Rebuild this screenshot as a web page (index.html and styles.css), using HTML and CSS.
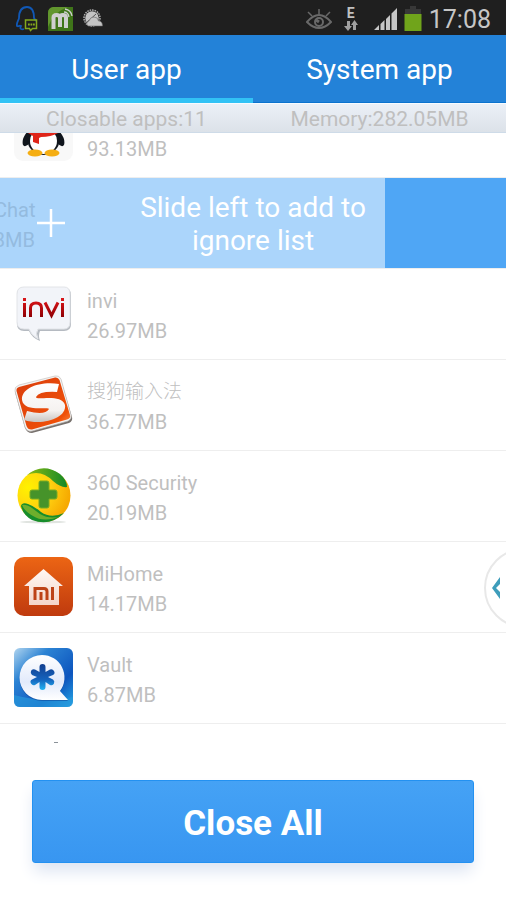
FILE: index.html
```html
<!DOCTYPE html>
<html lang="en">
<head>
<meta charset="utf-8">
<meta name="viewport" content="width=device-width, initial-scale=1">
<title>User app</title>
<link rel="stylesheet" href="styles.css">
</head>
<body>
<div class="status">
  <div class="status-group notices">
    <svg width="22" height="26" viewBox="0 0 22 26" fill="none">
      <path d="M8 23C4 24 4 22 5 20C3 19 3 21 1 20C0 17 3 14 3 12C3 5 6 1 11 1S18 5 18 12L20 15" stroke="#1158b5" stroke-width="1.8"/>
      <path d="M9.500 14h11v8.500h-4l-2 2-1-2h-4z" stroke="#83a91c" stroke-width="1.500"/>
      <path d="M12 18.500h7" stroke="#83a91c" stroke-width="2" stroke-dasharray="1.800 .7"/>
    </svg>
    <svg width="25" height="24" viewBox="0 0 25 24">
      <path d="M5 0H25V24H0V6Q0 1 5 0Z" fill="#3f7519"/>
      <path d="M5 0H20Q5 5 0 20V6Q0 1 5 0Z" fill="#62962e"/>
      <path d="M5.500 22V10.500Q5.500 8 8.500 8T12 10.500V20M12 10.500Q12 8 15 8T18 10.500V21" fill="none" stroke="#cfcfcf" stroke-width="4"/>
      <path d="M16 5q4 0 5 5M17 2q6 1 7 7" fill="none" stroke="#cfcfcf" stroke-width="1.300"/>
    </svg>
    <svg width="20" height="19" viewBox="0 0 20 19">
      <circle cx="9" cy="9" r="8" fill="none" stroke="#b0b0b0" stroke-width="1.500" stroke-dasharray="1.600 .9"/>
      <circle cx="9" cy="9" r="6.800" fill="#c4c4c4"/>
      <path d="M3 14L13 5" fill="none" stroke="#555" stroke-width="1"/>
      <path d="M5 17q-3-3 1-5q1-4 5-4q4 0 4.500 4q4 0 4 5z" fill="#c4c4c4" stroke="#666" stroke-width=".6"/>
    </svg>
  </div>
  <div class="status-group">
    <svg width="26" height="22" viewBox="0 0 26 22" fill="none" stroke="#696969" stroke-width="2">
      <path d="M1 14Q7 7 13 7T25 14Q19 20 13 20T1 14Z"/>
      <path d="M13 1v5M2 4l4 4M24 4l-4 4" stroke-width="1.500"/>
      <circle cx="13" cy="14" r="4"/><path d="M10 12l3 2" stroke-width="3"/>
    </svg>
    <div class="network">
      <span>E</span>
      <svg width="14" height="11" viewBox="0 0 14 11"><path d="M3 1h3v5h2l-4 5-4-5h3zM9 10V5H7l3.500-5L14 5h-2v5z" fill="#a0a0a0"/></svg>
    </div>
    <svg class="signal" width="23" height="22" viewBox="0 0 23 22"><path d="M0 22L5 17V22ZM6.500 22V16L10.500 12V22ZM12 22V11L16 7V22ZM17.500 22V5.500L23 0V22Z" fill="#c6c6c6"/></svg>
    <svg width="18" height="26" viewBox="0 0 18 26"><path d="M6 0h6v3h5v6H1V3h5z" fill="#383838"/><path d="M.5 8h17v17H.5z" fill="#70a41b"/></svg>
    <time>17:08</time>
  </div>
</div>
<nav class="tabs">
  <a class="tab active" href="#user">User app</a>
  <a class="tab" href="#system">System app</a>
</nav>
<div class="summary"><span>Closable apps:11</span><span>Memory:282.05MB</span></div>

<main class="list-area">
  <ul class="apps">
    <li class="app">
      <svg class="icon" viewBox="0 0 59 59">
        <rect width="59" height="59" rx="9" fill="#f8f8f8"/>
        <path d="M15 28Q7 36 9 43Q11 46 16 41L20 34H39L43 41Q48 46 50 43Q52 36 44 28Z" fill="#10151c"/>
        <ellipse cx="29.500" cy="20" rx="15" ry="15" fill="#10151c"/>
        <ellipse cx="29.500" cy="38" rx="16" ry="15" fill="#10151c"/>
        <ellipse cx="29.500" cy="39" rx="13.500" ry="13" fill="#fff"/>
        <path d="M14 27H45L44 31Q37 35 27 35L25 36V42L19 40V34L14 31Z" fill="#df2519"/>
        <ellipse cx="21" cy="51" rx="7.500" ry="3.500" fill="#f5ae13"/><ellipse cx="38" cy="51" rx="7.500" ry="3.500" fill="#f5ae13"/>
      </svg>
      <div class="info"><span>93.13MB</span></div>
    </li>
    <li class="app slid">
      <div class="slid-panel"><div class="info"><span>WeChat</span><span>6.88MB</span></div></div>
      <div class="hint">
        <svg width="28" height="28" viewBox="0 0 28 28"><path d="M14 0v28M0 14h28" stroke="#fff" stroke-width="2.500"/></svg>
        <p>Slide left to add to ignore list</p>
      </div>
    </li>
    <li class="app">
      <svg class="icon" viewBox="0 0 59 59">
        <defs><linearGradient id="red" gradientUnits="userSpaceOnUse" x1="0" y1="14" x2="0" y2="33"><stop stop-color="#e31519"/><stop offset="1" stop-color="#8e0004"/></linearGradient></defs>
        <path d="M10 4H50Q57 4 57 11V40Q57 47 50 47H26Q24 51 26 57Q18 54 15 47H10Q3 47 3 40V11Q3 4 10 4Z" fill="#b5bac1"/>
        <path d="M10 3H50Q56 3 56 10V38Q56 45 50 45H24Q21 49 24 55Q17 51 15 45H10Q3 45 3 38V10Q3 3 10 3Z" fill="#f2f4f9" stroke="#e2e4e8"/>
        <path d="M10.500 19V33M16.500 33V24Q16.500 19 22 19T27.500 24V33M31 18.500L37.500 31.500L44 18.500M48.500 19V33" fill="none" stroke="url(#red)" stroke-width="3"/>
        <path d="M9 14h3v3H9zM47 14h3v3h-3z" fill="#d71519"/>
      </svg>
      <div class="info"><span>invi</span><span>26.97MB</span></div>
    </li>
    <li class="app">
      <svg class="icon" viewBox="0 0 59 59">
        <defs><linearGradient id="orange" x2="1" y2="1"><stop stop-color="#d93d0c"/><stop offset=".8" stop-color="#ef5009"/><stop offset="1" stop-color="#ff9650"/></linearGradient><linearGradient id="silver" x2="0" y2="1"><stop stop-color="#fff"/><stop offset=".7" stop-color="#f5f2f0"/><stop offset="1" stop-color="#c8c4c0"/></linearGradient></defs>
        <path d="M5 12L41 2Q45 1 47 5L58 42Q59 46 55 48L18 58Q13 58 11 53L1 17Q1 13 5 12Z" fill="#77716d"/>
        <path d="M5 10L41 1Q45 0 47 4L57 40Q58 44 54 46L18 56Q13 57 11 52L1 16Q0 12 5 10Z" fill="#f4f4f3" stroke="#c7c3c0" stroke-width=".7"/>
        <path d="M5 12L41 2.500Q44 2 45.500 5L56 40Q57 43 53 44.500L18 54.500Q14 55 12.500 51L2.500 16Q2 13 5 12Z" fill="url(#orange)"/>
        <path d="M45 9L43 17Q25 16 22 22C21 26 48 18 51 30C53 43 29 51 10 45L13 36Q31 41 35 34C35 31 10 38 8 25C7 13 26 6 45 9Z" fill="url(#silver)"/>
      </svg>
      <div class="info"><span class="chinese" lang="zh">搜狗输入法</span><span>36.77MB</span></div>
    </li>
    <li class="app">
      <svg class="icon" viewBox="0 0 59 59">
        <defs><radialGradient id="yellow" cx=".2" cy=".35" r=".8"><stop stop-color="#fff200"/><stop offset=".55" stop-color="#ffd010"/><stop offset="1" stop-color="#f6a900"/></radialGradient><linearGradient id="leaf"><stop stop-color="#8abb13"/><stop offset="1" stop-color="#138827"/></linearGradient></defs>
        <ellipse cx="29" cy="56" rx="23" ry="1.500" fill="#e0e4e0"/>
        <circle cx="30" cy="29.500" r="26.500" fill="url(#yellow)"/>
        <path d="M13 9Q29-4 46 8Q53 14 53 21Q47 22 39 15Q27 3 13 9Z" fill="url(#leaf)"/>
        <path d="M7 40Q8 36 14 38Q20 40 27 46Q37 53 50 47Q36 61 18 54Q9 49 7 40Z" fill="#168d2b"/>
        <path d="M8 39Q12 38 18 42L26 48Q36 54 47 50Q30 57 19 50Q11 46 8 39Z" fill="#6eae2c"/>
        <path d="M26 15H33Q35 15 35 17V24H41Q43 24 43 26V31Q43 33 41 33H35V40Q35 42 33 42H27Q25 42 25 40V33H18Q16 33 16 31V26Q16 24 18 24H25V17Q25 15 26 15Z" fill="#46932a" stroke="#78ab22"/>
      </svg>
      <div class="info"><span>360 Security</span><span>20.19MB</span></div>
    </li>
    <li class="app">
      <svg class="icon" viewBox="0 0 59 59">
        <defs><linearGradient id="home" x2="0" y2="1"><stop stop-color="#ec6514"/><stop offset="1" stop-color="#bf3a0e"/></linearGradient><linearGradient id="house" x2="0" y2="1"><stop stop-color="#fff8f5"/><stop offset="1" stop-color="#f4d5c9"/></linearGradient></defs>
        <rect width="59" height="59" rx="10" fill="url(#home)"/>
        <path d="M29.500 12L49 29H45V48H15V29H10Z" fill="url(#house)"/>
        <path d="M21 43V31.500H30Q33 31.500 33 34.500V43M27 35V43M38.500 30V43" fill="none" stroke="#bd4217" stroke-width="3"/>
      </svg>
      <div class="info"><span>MiHome</span><span>14.17MB</span></div>
    </li>
    <li class="app">
      <svg class="icon" viewBox="0 0 59 59">
        <defs><linearGradient id="vault" x2="1" y2="1"><stop stop-color="#b1d5ef"/><stop offset=".3" stop-color="#2b83d4"/><stop offset=".7" stop-color="#0d55be"/><stop offset="1" stop-color="#27a8e5"/></linearGradient><linearGradient id="star" x2="0" y2="1"><stop stop-color="#123e8f"/><stop offset=".6" stop-color="#1463bd"/><stop offset="1" stop-color="#23b4f2"/></linearGradient><linearGradient id="bubble" x2="0" y2="1"><stop stop-color="#fff"/><stop offset=".6" stop-color="#e2eafb"/><stop offset="1" stop-color="#fff"/></linearGradient></defs>
        <rect width="59" height="59" rx="6" fill="url(#vault)"/>
        <path d="M0 47Q30 55 59 49V53Q59 59 53 59H6Q0 59 0 53Z" fill="#2698db" opacity=".7"/>
        <path d="M28 8A22.500 22.500 0 1 0 28 53H54L46 44A22.500 22.500 0 0 0 28 8Z" fill="#0c3f91" opacity=".5"/>
        <path d="M28 7A22.500 22.500 0 1 0 28 52H54L46 43A22.500 22.500 0 0 0 28 7Z" fill="url(#bubble)"/>
        <path d="M25.500 19Q25.500 16 28.500 16T31.500 19V24L36 21.500Q38.500 20.500 40 23T39 27L34 29L39 31.500Q41 33 40 35.500T36 37L31.500 34V39Q31.500 42 28.500 42T25.500 39V34L21 37Q18.500 38 17 35.500T18 31.500L23 29L18 27Q16 25.500 17 23T21 21.500L25.500 24Z" fill="url(#star)"/>
      </svg>
      <div class="info"><span>Vault</span><span>6.87MB</span></div>
    </li>
    <li class="app">
      <svg class="icon" viewBox="0 0 59 59"><path d="M40 3h4v1h-4z" fill="#8b9299"/></svg>
    </li>
  </ul>
  <button class="handle" type="button" aria-label="Open side panel">
    <svg width="8" height="22" viewBox="0 0 8 22"><path d="M8 0V7L4 11L8 15V22L0 11Z" fill="#3e9dbb"/></svg>
  </button>
</main>
<footer class="actions"><button class="close-all" type="button">Close All</button></footer>
</body>
</html>
```
FILE: styles.css
```css
* { box-sizing: border-box; }

body {
  margin: 0;
  height: 100vh;
  display: flex;
  flex-direction: column;
  overflow: hidden;
  background: #fff;
  color: #bfbfbf;
  font-family: Roboto, "Noto Sans CJK SC", sans-serif;
  font-size: 20px;
}

svg { display: block; flex: none; }

.status {
  display: flex;
  justify-content: space-between;
  align-items: center;
  height: 35px;
  flex: none;
  padding: 2px 15px 0 16px;
  background: #1f1f1f;
}

.status-group { display: flex; align-items: center; gap: 7px; }
.notices { gap: 10px; }

.network {
  display: flex;
  flex-direction: column;
  align-items: center;
  margin: 0 9px 0 5px;
  color: #c0c0c0;
  font-size: 14px;
  font-weight: 700;
  line-height: 13px;
}

.status time {
  padding-top: 2px;
  color: #c6c6c6;
  font-size: 25px;
  line-height: 32px;
}

.tabs {
  display: flex;
  height: 68px;
  flex: none;
  background: #2382d8;
}

.tab {
  flex: 1;
  padding-top: 2px;
  border-bottom: 1px solid #0b73ce;
  color: #fff;
  font-size: 28px;
  line-height: 66px;
  text-align: center;
  text-decoration: none;
}

.tab.active { box-shadow: inset 0 -5px #32c2f5; border-bottom: 0; }

.summary {
  display: flex;
  height: 30px;
  flex: none;
  border-top: 1px solid #f7fbff;
  border-bottom: 1px solid #cedbe8;
  background: linear-gradient(#ebf0f7, #dce2e9);
  font-size: 21px;
  line-height: 30px;
  text-align: center;
}

.summary span { flex: 1; }

.list-area {
  position: relative;
  flex: 1;
  min-height: 0;
  overflow: hidden;
}

.apps { margin: -46px 0 0; padding: 0; list-style: none; }

.app {
  display: flex;
  align-items: center;
  gap: 14px;
  height: 91px;
  padding: 0 0 1px 14px;
  border-bottom: 1px solid #eee;
}

.icon { width: 59px; height: 59px; }

.info {
  display: flex;
  flex-direction: column;
  justify-content: flex-end;
  height: 64px;
  line-height: 30px;
}

.chinese { font-size: 19px; font-weight: 300; }

.slid {
  position: relative;
  padding: 0;
  background: #4fa6f5;
  overflow: hidden;
}

.slid-panel {
  display: flex;
  align-items: center;
  flex: none;
  width: 100%;
  height: 100%;
  margin-left: -121px;
  padding-left: 87px;
  background: #abd5fb;
  color: #94bbdf;
}

.hint {
  position: absolute;
  inset: 0;
  display: flex;
  align-items: center;
  justify-content: center;
  color: #fff;
  font-size: 28px;
  line-height: 33px;
  text-align: center;
}

.hint svg { position: absolute; left: 37px; }
.hint p { width: 260px; margin: 0; padding-top: 2px; }

.handle {
  position: absolute;
  top: 415px;
  right: -58px;
  width: 80px;
  height: 80px;
  padding: 0 0 0 6px;
  border: 2px solid #e8e8e8;
  border-radius: 50%;
  background: #fff;
}

.actions { flex: none; padding: 37px 32px; }

.close-all {
  display: block;
  width: 100%;
  height: 83px;
  padding-top: 4px;
  border: 1px solid #2391f1;
  border-radius: 3px;
  background: linear-gradient(#45a2f5, #3896f1);
  box-shadow: 0 10px 16px -2px #dce4f2;
  color: #fff;
  font: 700 35px Roboto, sans-serif;
}
```
